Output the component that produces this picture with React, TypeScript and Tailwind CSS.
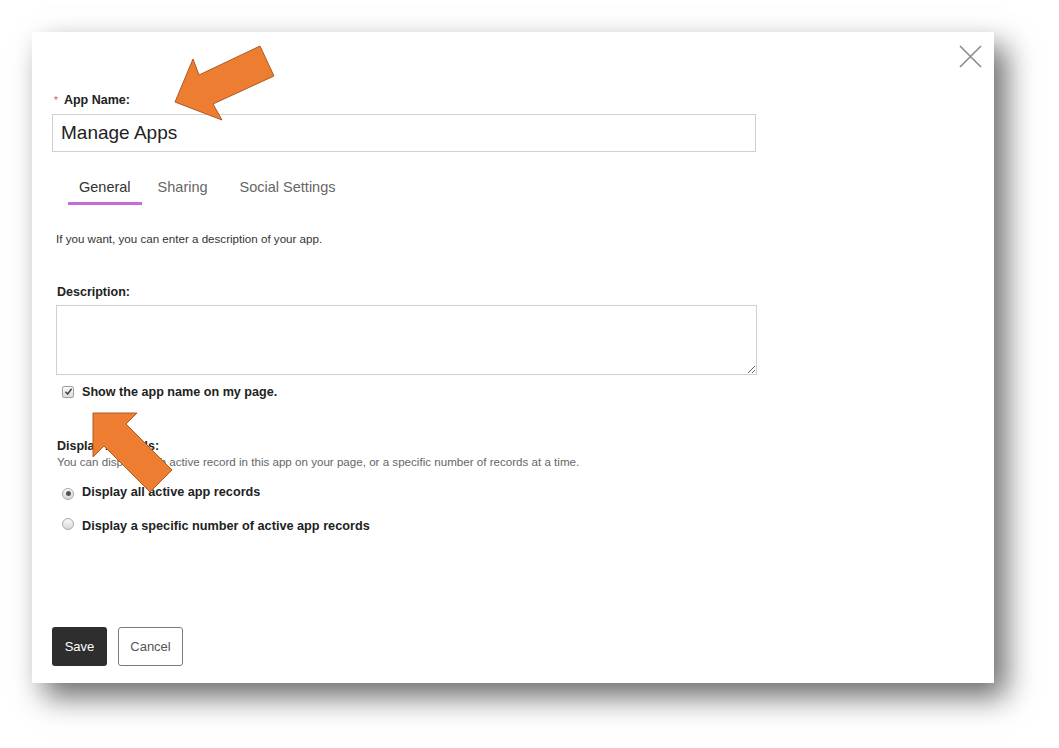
import React from "react";

const font = { fontFamily: '"Liberation Sans", Arial, Helvetica, sans-serif' };

function CheckBox() {
  return (
    <span className="inline-flex h-[12px] w-[12px] items-center justify-center rounded-[2px] border border-[#a0a0a0] bg-gradient-to-b from-[#fafafa] to-[#dcdcdc]">
      <svg width="9" height="9" viewBox="0 0 9 9">
        <path d="M1.5 4.8 L3.6 7 L7.6 1.8" fill="none" stroke="#444" strokeWidth="1.5" />
      </svg>
    </span>
  );
}

function Radio({ checked }: { checked?: boolean }) {
  return (
    <span className="inline-flex h-[12px] w-[12px] items-center justify-center rounded-full border border-[#a8a8a8] bg-gradient-to-b from-[#fafafa] to-[#d8d8d8]">
      {checked && <span className="h-[5px] w-[5px] rounded-full bg-[#555]" />}
    </span>
  );
}

export default function App() {
  return (
    <div className="relative h-[748px] w-[1059px] bg-white" style={font}>
      <div className="p-8">
        <div className="relative flex h-[651px] w-[962px] flex-col bg-white px-5 pt-[61px] pb-[17px] shadow-[12px_14px_28px_rgba(0,0,0,0.58)]">
          <button className="absolute right-[12px] top-[13px] h-[23px] w-[23px]">
            <svg width="23" height="23" viewBox="0 0 23 23">
              <path d="M1 1 L22 22 M22 1 L1 22" stroke="#8a8a8a" strokeWidth="1.6" />
            </svg>
          </button>

          <div className="flex items-center text-[12.5px] leading-[15px] font-bold text-[#222]">
            <span className="ml-[2px] mr-[4px] text-[10px] font-normal text-[#d9534f]">*</span>
            <span className="ml-[2px]">App Name:</span>
          </div>

          <input
            defaultValue="Manage Apps"
            className="mt-[6px] h-[38px] w-[704px] border border-[#d0d0d0] px-[8px] text-[19px] text-[#222] outline-none"
          />

          <div className="mt-[25px] flex text-[14.5px] leading-[20px]">
            <div className="ml-[16px] border-b-[3px] border-[#c66cd6] px-[11px] pb-[5px] text-[#333]">General</div>
            <div className="ml-[5px] px-[11px] pb-[5px] text-[#666]">Sharing</div>
            <div className="ml-[10px] px-[11px] pb-[5px] text-[#666]">Social Settings</div>
          </div>

          <div className="pl-[4px]">
            <div className="mt-[27px] text-[11.6px] leading-[14px] text-[#333]">
              If you want, you can enter a description of your app.
            </div>

            <div className="mt-[39px] ml-[1px] text-[12.5px] leading-[15px] font-bold text-[#222]">Description:</div>

            <textarea className="mt-[5px] block h-[70px] w-[701px] border border-[#d0d0d0] outline-none" />

            <div className="mt-[10px] flex items-center text-[12.6px] leading-[15px] font-bold text-[#222]">
              <span className="ml-[6px]"><CheckBox /></span>
              <span className="ml-[8px]">Show the app name on my page.</span>
            </div>

            <div className="mt-[39px] ml-[1px] text-[12.5px] leading-[15px] font-bold text-[#222]">Display Records:</div>
            <div className="mt-[1px] ml-[1px] text-[11.6px] leading-[14px] text-[#666]">
              You can display each active record in this app on your page, or a specific number of records at a time.
            </div>

            <div className="mt-[16px] flex items-center text-[12.7px] leading-[15px] font-bold text-[#222]">
              <span className="ml-[6px]"><Radio checked /></span>
              <span className="ml-[8px]">Display all active app records</span>
            </div>
            <div className="mt-[18px] flex items-center text-[12.7px] leading-[15px] font-bold text-[#222]">
              <span className="ml-[6px]"><Radio /></span>
              <span className="ml-[8px]">Display a specific number of active app records</span>
            </div>
          </div>

          <div className="mt-auto flex gap-[11px]">
            <button className="h-[39px] w-[55px] rounded-[3px] bg-[#2e2e2e] text-[13px] text-white">Save</button>
            <button className="h-[39px] w-[65px] rounded-[3px] border border-[#7a7a7a] bg-white text-[13px] text-[#555]">Cancel</button>
          </div>
        </div>
      </div>

      <svg className="pointer-events-none absolute inset-0" width="1059" height="748" viewBox="0 0 1059 748">
        <polygon
          points="175,102 193,59 199,75 260,46 274,76 213,104 222,120"
          fill="#ED7D31"
          stroke="#AE5A21"
          strokeWidth="1"
        />
        <polygon
          points="93,413 137,413 126,424 172,470 150,492 104,446 93,457"
          fill="#ED7D31"
          stroke="#AE5A21"
          strokeWidth="1"
        />
      </svg>
    </div>
  );
}
